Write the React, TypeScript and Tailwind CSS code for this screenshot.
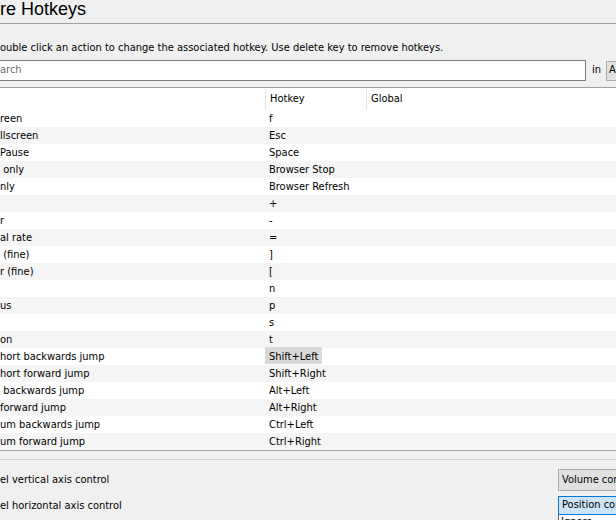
import React from "react";

const rows: [string, string][] = [
  ["reen", "f"],
  ["llscreen", "Esc"],
  ["Pause", "Space"],
  [" only", "Browser Stop"],
  ["nly", "Browser Refresh"],
  ["", "+"],
  ["r", "-"],
  ["al rate", "="],
  [" (fine)", "]"],
  ["r (fine)", "["],
  ["", "n"],
  ["us", "p"],
  ["", "s"],
  ["on", "t"],
  ["hort backwards jump", "Shift+Left"],
  ["hort forward jump", "Shift+Right"],
  [" backwards jump", "Alt+Left"],
  ["forward jump", "Alt+Right"],
  ["um backwards jump", "Ctrl+Left"],
  ["um forward jump", "Ctrl+Right"],
];

export default function App() {
  return (
    <div
      className="w-[616px] h-[520px] overflow-hidden bg-[#f0f0f0] text-[11px] text-black"
      style={{ fontFamily: '"DejaVu Sans Condensed", "Liberation Sans", sans-serif' }}
    >
      <div className="h-[24px] border-b border-[#a0a0a0]">
        <div
          className="text-[18px] leading-[18px] whitespace-pre"
          style={{ fontFamily: '"Liberation Sans", sans-serif' }}
        >
          re Hotkeys
        </div>
      </div>

      <div className="pt-[17px] h-[29px] leading-[13px] whitespace-pre">
        ouble click an action to change the associated hotkey. Use delete key to remove hotkeys.
      </div>

      <div className="mt-[7px] flex items-center h-[21px]">
        <div className="w-[586px] h-[21px] bg-white border border-l-0 border-[#7a7a7a] flex items-center text-[#6d6d6d]">
          arch
        </div>
        <span className="ml-[6px] w-[14px]">in</span>
        <div className="flex-1 h-[20px] bg-[#e1e1e1] border border-r-0 border-[#adadad] pl-[2px] flex items-center whitespace-nowrap overflow-hidden">
          Actions
        </div>
      </div>

      <div className="mt-[6px] bg-white border-t border-b border-[#a0a0a0]">
        <div className="flex h-[22px] items-center pt-[1px]">
          <div className="w-[265px] h-full" />
          <div className="w-[101px] h-full border-l border-[#e5e5e5] pl-[4px] flex items-center">
            Hotkey
          </div>
          <div className="flex-1 h-full border-l border-[#e5e5e5] pl-[4px] flex items-center">
            Global
          </div>
        </div>
        {rows.map(([action, key], i) => (
          <div
            key={i}
            className={`flex h-[17px] items-center ${i % 2 === 1 ? "bg-[#f5f5f5]" : "bg-white"}`}
          >
            <div className="w-[265px] whitespace-pre pt-[1px]">{action}</div>
            <div className="flex-1">
              <span
                className={`inline-block h-[17px] leading-[17px] pt-[1px] pl-[4px] pr-[4px] ${
                  key === "Shift+Left" ? "bg-[#d9d9d9]" : ""
                }`}
              >
                {key}
              </span>
            </div>
          </div>
        ))}
      </div>

      <div className="mt-[8px] border-t border-[#d5d5d5]" />

      <div className="mt-[9px] flex items-center h-[22px]">
        <div className="flex-1 whitespace-pre">el vertical axis control</div>
        <div className="w-[58px] h-[22px] bg-[#e1e1e1] border border-r-0 border-[#adadad] pl-[3px] flex items-center whitespace-nowrap overflow-hidden">
          Volume control
        </div>
      </div>

      <div className="mt-[5px] flex items-start">
        <div className="flex-1 h-[19px] pt-[1px] flex items-center whitespace-pre">el horizontal axis control</div>
        <div className="w-[58px]">
          <div className="h-[19px] bg-[#cce4f7] border border-r-0 border-[#0078d7] pl-[3px] flex items-center whitespace-nowrap overflow-hidden">
            Position control
          </div>
          <div className="h-[20px] bg-white border-l border-[#646464] pl-[2px] leading-[14px] whitespace-nowrap overflow-hidden">
            Ignore
          </div>
        </div>
      </div>
    </div>
  );
}
